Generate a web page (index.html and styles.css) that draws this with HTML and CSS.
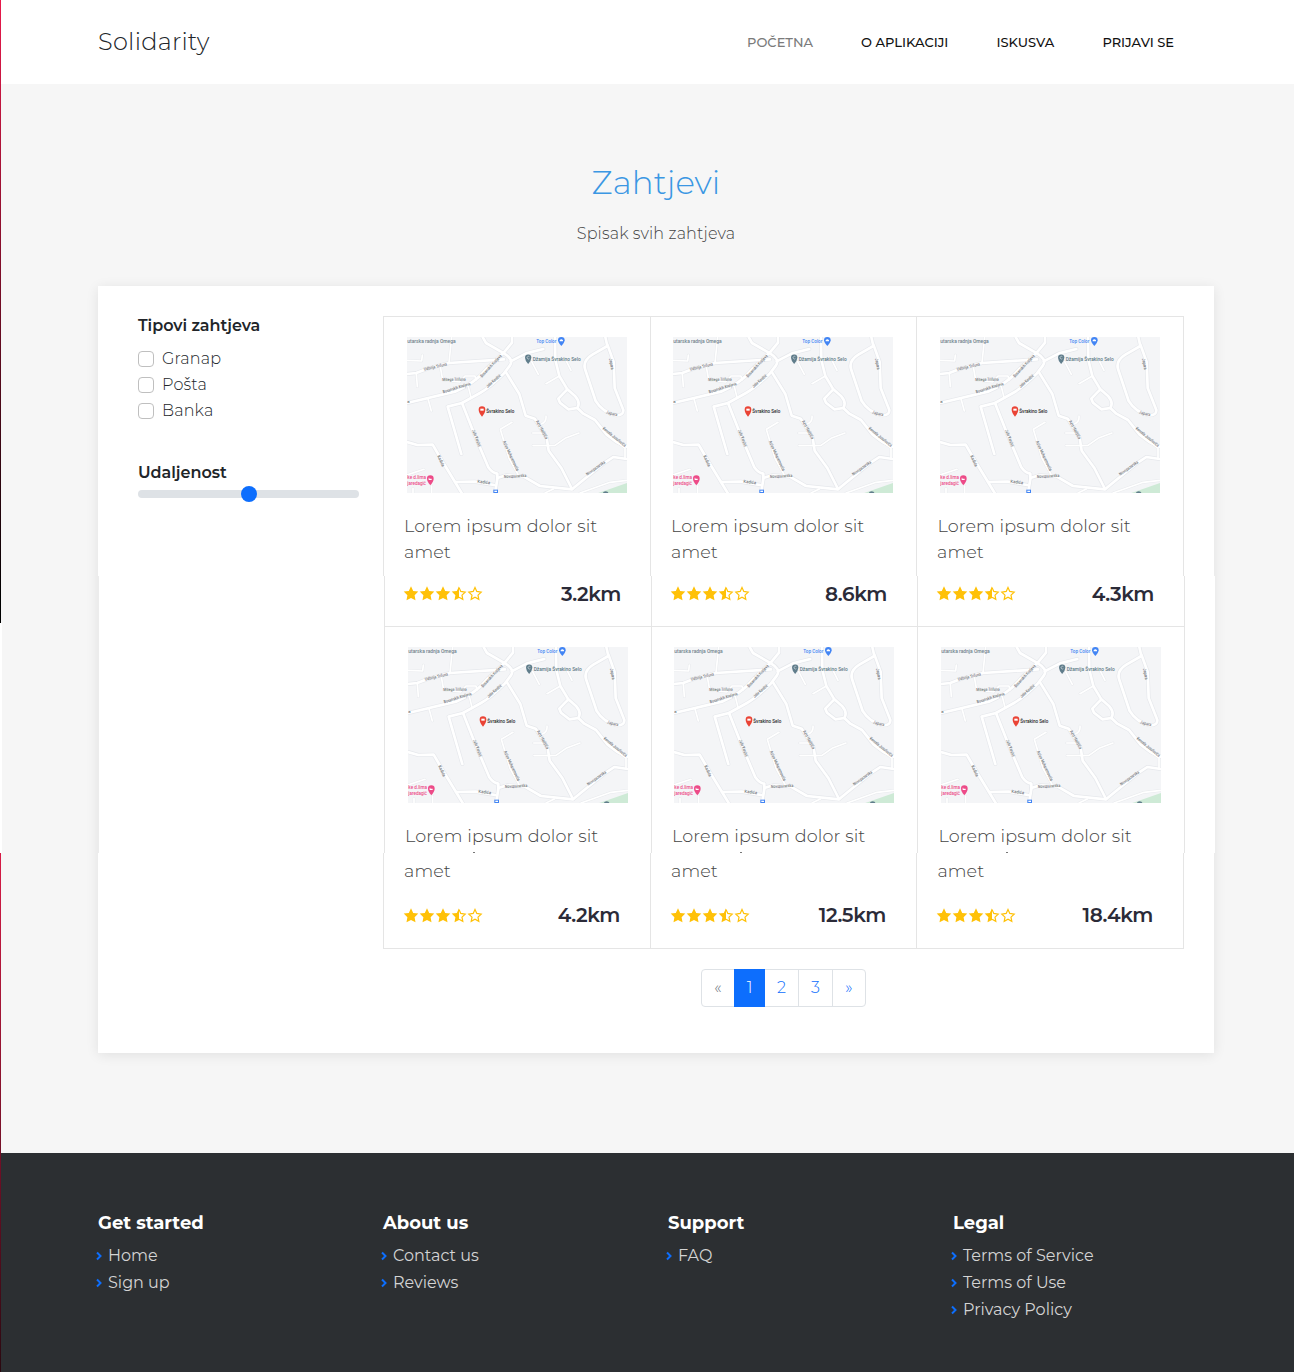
FILE: index.html
```html
<!DOCTYPE html>
<html lang="bs">
<head>
<meta charset="utf-8">
<title>Solidarity</title>
<link rel="stylesheet" href="styles.css">
</head>
<body>
<svg class="defs" width="0" height="0" aria-hidden="true">
  <symbol id="map" viewBox="81 81 660 468">
    <rect x="81" y="81" width="660" height="468" fill="#f4f5f7"/>
    <path d="M655 549 L741 519 V549Z" fill="#ceead6"/>
    <g id="roads" fill="none" stroke-linecap="round" stroke-linejoin="round">
      <g stroke="#e6e8ec" stroke-width="12">
        <path d="M81 279 L225 245 Q285 220 320 176 L372 127 L396 98 V81"/>
        <path d="M308 81 L318 99 L372 130 Q402 148 390 166 L372 190 Q330 232 300 249 L246 279 L203 290 L244 432"/>
        <path d="M81 192 L109 189 L146 175 L207 159 L372 148"/>
        <path d="M392 154 L438 130 L490 117"/>
        <path d="M246 279 L284 375 L325 472 Q338 490 352 491 V508 L345 549"/>
        <path d="M378 187 L418 252 L437 317 L464 326 L500 384 L506 422 L544 474 L576 537"/>
        <path d="M525 81 L526 150 L538 198 L562 238 L586 259 Q602 278 592 294 L565 298 L540 278 L535 266 L562 238"/>
        <path d="M592 294 L610 311 L645 330 L680 374 L709 396 L741 410"/>
        <path d="M676 81 L682 108 L637 134 Q606 153 616 180 L647 273 Q670 309 709 316 Q731 316 730 300 L704 234 L701 156 L682 103"/>
        <path d="M81 396 L112 405 L158 404 L183 447 L225 516 L245 549"/>
        <path d="M225 516 L284 515 L342 525 M352 504 L378 496 L430 499 L480 528 L576 538 L618 503 L670 461 L700 441 L741 447"/>
      </g>
      <g stroke="#e8eaed" stroke-width="8">
        <path d="M81 151 L125 153 L127 135 M109 190 L112 230 M215 81 L207 158 M180 165 L188 210 L239 216 L255 198 L285 198 L288 210 M265 230 L273 262 M144 266 L154 303 M415 495 L387 445 L361 358 L396 337 M455 155 L475 193 M538 198 L498 221 M555 145 L573 181 M458 369 L486 369 M459 407 L525 406 L555 385 L597 369 M498 318 Q500 337 483 342 M680 374 L735 414 V447 M81 495 L132 478 M99 549 V535 M155 549 V528 M495 549 L520 537 M600 549 L690 517 L741 511"/>
      </g>
      <g stroke="#fff" stroke-width="8">
        <path d="M81 279 L225 245 Q285 220 320 176 L372 127 L396 98 V81"/>
        <path d="M308 81 L318 99 L372 130 Q402 148 390 166 L372 190 Q330 232 300 249 L246 279 L203 290 L244 432"/>
        <path d="M81 192 L109 189 L146 175 L207 159 L372 148"/>
        <path d="M392 154 L438 130 L490 117"/>
        <path d="M246 279 L284 375 L325 472 Q338 490 352 491 V508 L345 549"/>
        <path d="M378 187 L418 252 L437 317 L464 326 L500 384 L506 422 L544 474 L576 537"/>
        <path d="M525 81 L526 150 L538 198 L562 238 L586 259 Q602 278 592 294 L565 298 L540 278 L535 266 L562 238"/>
        <path d="M592 294 L610 311 L645 330 L680 374 L709 396 L741 410"/>
        <path d="M676 81 L682 108 L637 134 Q606 153 616 180 L647 273 Q670 309 709 316 Q731 316 730 300 L704 234 L701 156 L682 103"/>
        <path d="M81 396 L112 405 L158 404 L183 447 L225 516 L245 549"/>
        <path d="M225 516 L284 515 L342 525 M352 504 L378 496 L430 499 L480 528 L576 538 L618 503 L670 461 L700 441 L741 447"/>
      </g>
      <g stroke="#fff" stroke-width="5">
        <path d="M81 151 L125 153 L127 135 M109 190 L112 230 M215 81 L207 158 M180 165 L188 210 L239 216 L255 198 L285 198 L288 210 M265 230 L273 262 M144 266 L154 303 M415 495 L387 445 L361 358 L396 337 M455 155 L475 193 M538 198 L498 221 M555 145 L573 181 M458 369 L486 369 M459 407 L525 406 L555 385 L597 369 M498 318 Q500 337 483 342 M680 374 L735 414 V447 M81 495 L132 478 M99 549 V535 M155 549 V528 M495 549 L520 537 M600 549 L690 517 L741 511"/>
      </g>
    </g>
    <g font-family="Roboto, sans-serif" font-size="13" font-weight="500" fill="#6f7377">
      <text transform="translate(133 182) rotate(-13)" textLength="70" lengthAdjust="spacingAndGlyphs">Udbinja Trifuna</text>
      <text transform="translate(187 213) rotate(-1)" textLength="70" lengthAdjust="spacingAndGlyphs">Mitega Trifuna</text>
      <text transform="translate(190 250) rotate(-17)" textLength="86" lengthAdjust="spacingAndGlyphs">Bosanskih Kraljeva</text>
      <text transform="translate(306 203) rotate(-47)" textLength="88" lengthAdjust="spacingAndGlyphs">Bosanskih Kraljeva</text>
      <text transform="translate(323 234) rotate(-41)" textLength="54" lengthAdjust="spacingAndGlyphs">Jaše Karabić</text>
      <text transform="translate(276 361) rotate(69)" textLength="54" lengthAdjust="spacingAndGlyphs">Jaše Karabić</text>
      <text transform="translate(368 395) rotate(65)" textLength="98" lengthAdjust="spacingAndGlyphs">Azize Muharemovića</text>
      <text transform="translate(467 334) rotate(61)" textLength="62" lengthAdjust="spacingAndGlyphs">Aziz Hadžića</text>
      <text transform="translate(687 146) rotate(79)" textLength="34" lengthAdjust="spacingAndGlyphs">Japara</text>
      <text transform="translate(677 310) rotate(15)" textLength="35" lengthAdjust="spacingAndGlyphs">Japara</text>
      <text transform="translate(667 357) rotate(39)" textLength="86" lengthAdjust="spacingAndGlyphs">Kemala Jusufovića</text>
      <text transform="translate(172 438) rotate(66)" textLength="36" lengthAdjust="spacingAndGlyphs">Kadića</text>
      <text transform="translate(292 518) rotate(8)" textLength="38" lengthAdjust="spacingAndGlyphs">Kadića</text>
      <text transform="translate(372 504) rotate(-3)" textLength="67" lengthAdjust="spacingAndGlyphs">Novopazarska</text>
      <text transform="translate(622 497) rotate(-35)" textLength="67" lengthAdjust="spacingAndGlyphs">Novopazarska</text>
      <text x="82" y="280">a</text>
      <g font-size="15">
        <text x="82" y="100" fill="#71838d" textLength="145" lengthAdjust="spacingAndGlyphs">utarska radnja Omega</text>
        <text x="469" y="100" fill="#3f86f4" textLength="60" lengthAdjust="spacingAndGlyphs">Top Color</text>
        <text x="458" y="154" fill="#617b86" textLength="144" lengthAdjust="spacingAndGlyphs">Džamija Švrakino Selo</text>
        <text x="319" y="308" fill="#292929" textLength="84" lengthAdjust="spacingAndGlyphs">Švrakino Selo</text>
        <g fill="#ed4b88">
          <text x="82" y="508" textLength="56" lengthAdjust="spacingAndGlyphs">ke d.lima</text>
          <text x="82" y="525" textLength="56" lengthAdjust="spacingAndGlyphs">jaredagić</text>
        </g>
      </g>
    </g>
    <path d="M296 299a10 10 0 1 1 20 0q0 9-10 21q-10-12-10-21Z" fill="#ea4335"/><path d="M301 296h10v6h-10z" fill="#fff"/>
    <path d="M435 143a9.500 9.500 0 1 1 19 0q0 8-9.500 19q-9.500-11-9.500-19Z" fill="#607d8b"/><path d="M448 140a4 4 0 1 0 0 6" fill="none" stroke="#dce4e8" stroke-width="2"/>
    <path d="M534 91a10 10 0 1 1 20 0q0 6-10 17q-10-11-10-17Z" fill="#4285f4"/><path d="M539 94v-3q5-7 10 0v3z" fill="#fff"/>
    <path d="M141 506a10 10 0 1 1 20 0q0 8-10 20q-10-12-10-20Z" fill="#ed4b88"/><path d="M146 503h2v3h7v4h-9z" fill="#fff"/>
    <rect x="340" y="539" width="14" height="10" fill="#4285f4"/><path d="M343 542h8v4h-8z" fill="#fff"/>
    <circle cx="677" cy="553" r="9" fill="#607d8b"/>
  </symbol>
  <symbol id="stars" viewBox="0 0 80 15">
    <g fill="#ffc107">
      <path id="star" d="M8 .3 10.200 4.900 15.300 5.600 11.600 9.200 12.500 14.200 8 11.900 3.500 14.200 4.400 9.200 .7 5.600 5.800 4.900Z"/>
      <use href="#star" x="16"/><use href="#star" x="32"/>
      <path d="M56 .3 V11.900 L51.500 14.200 52.400 9.200 48.700 5.600 53.800 4.900Z"/>
    </g>
    <g fill="none" stroke="#ffc107" stroke-width="1.200">
      <path d="M56 1.500 57.800 5.400 62.200 6.100 59 9.100 59.800 13.400 56 11.300"/>
      <path d="M72 1.500 73.800 5.400 78.200 6.100 75 9.100 75.800 13.400 72 11.300 68.200 13.400 69 9.100 65.800 6.100 70.200 5.400Z"/>
    </g>
  </symbol>
  <symbol id="chev" viewBox="0 0 6 10"><path d="M1 1.500 4.500 5 1 8.500" fill="none" stroke="#0d6efd" stroke-width="2"/></symbol>
</svg>
<div class="page">
  <header class="bar">
    <a class="brand">Solidarity</a>
    <nav class="nav"><a class="active">POČETNA</a><a>O APLIKACIJI</a><a>ISKUSVA</a><a>PRIJAVI SE</a></nav>
  </header>
  <main>
    <div class="intro"><h1>Zahtjevi</h1><p>Spisak svih zahtjeva</p></div>
    <section class="panel">
      <aside class="filters">
        <h2>Tipovi zahtjeva</h2>
        <label><i class="box"></i><span>Granap</span></label>
        <label><i class="box"></i><span>Pošta</span></label>
        <label><i class="box"></i><span>Banka</span></label>
        <h2 class="distance">Udaljenost</h2>
        <div class="range"><i class="thumb"></i></div>
      </aside>
      <div class="results">
        <div class="row top first">
          <article><svg class="map"><use href="#map"/></svg><h3>Lorem ipsum dolor sit amet</h3></article>
          <article><svg class="map"><use href="#map"/></svg><h3>Lorem ipsum dolor sit amet</h3></article>
          <article><svg class="map"><use href="#map"/></svg><h3>Lorem ipsum dolor sit amet</h3></article>
        </div>
        <div class="row meta shift">
          <div><div class="cell"><svg class="stars"><use href="#stars"/></svg><b>3.2km</b></div></div>
          <div><div class="cell"><svg class="stars"><use href="#stars"/></svg><b>8.6km</b></div></div>
          <div><div class="cell"><svg class="stars"><use href="#stars"/></svg><b>4.3km</b></div></div>
        </div>
        <div class="row top second shift">
          <article><svg class="map"><use href="#map"/></svg><h3>Lorem ipsum dolor sit</h3></article>
          <article><svg class="map"><use href="#map"/></svg><h3>Lorem ipsum dolor sit</h3></article>
          <article><svg class="map"><use href="#map"/></svg><h3>Lorem ipsum dolor sit</h3></article>
        </div>
        <div class="row last">
          <article><h3>amet</h3><div class="cell"><svg class="stars"><use href="#stars"/></svg><b>4.2km</b></div></article>
          <article><h3>amet</h3><div class="cell"><svg class="stars"><use href="#stars"/></svg><b>12.5km</b></div></article>
          <article><h3>amet</h3><div class="cell"><svg class="stars"><use href="#stars"/></svg><b>18.4km</b></div></article>
        </div>
        <div class="pages"><span class="off">«</span><span class="on">1</span><span>2</span><span>3</span><span>»</span></div>
      </div>
    </section>
  </main>
  <footer>
    <div><h4>Get started</h4><a><svg><use href="#chev"/></svg>Home</a><a><svg><use href="#chev"/></svg>Sign up</a></div>
    <div><h4>About us</h4><a><svg><use href="#chev"/></svg>Contact us</a><a><svg><use href="#chev"/></svg>Reviews</a></div>
    <div><h4>Support</h4><a><svg><use href="#chev"/></svg>FAQ</a></div>
    <div><h4>Legal</h4><a><svg><use href="#chev"/></svg>Terms of Service</a><a><svg><use href="#chev"/></svg>Terms of Use</a><a><svg><use href="#chev"/></svg>Privacy Policy</a></div>
  </footer>
</div>
</body>
</html>
```
FILE: styles.css
```css
* { box-sizing: border-box; }
body { margin: 0; font: 300 16px/26px Montserrat, Inter, sans-serif; color: #212529; background: #f6f6f6; }
h1, h2, h3, h4, p { margin: 0; }
.defs { position: absolute; }
.page { position: relative; height: 1372px; overflow: hidden; display: flex; flex-direction: column; }
.page::before { content: ""; position: absolute; left: 0; top: 0; width: 1px; height: 623px; background: linear-gradient(#e8194b, #000 96%); }
.page::after { content: ""; position: absolute; left: 0; top: 623px; width: 2px; height: 749px;
  background: linear-gradient(#fff 230px, transparent 230px) 0 0 / 2px 100% no-repeat, linear-gradient(#d81b46 230px, #2a0810) 0 0 / 1px 100% no-repeat; }
.bar { height: 84px; background: #fff; padding: 0 120px 0 98px; display: flex; justify-content: space-between; align-items: center; }
.brand { font-size: 24px; letter-spacing: .3px; }
.nav { display: flex; gap: 48px; font-size: 13px; font-weight: 500; color: #111; }
.nav .active { color: #7b7b7b; }
main { height: 1069px; padding: 76px 80px 0 98px; }
.intro { height: 126px; text-align: center; }
.intro h1 { font-size: 32.5px; font-weight: 300; line-height: 45px; color: #3b97e3; letter-spacing: .1px; }
.intro p { padding-top: 16px; letter-spacing: .13px; color: #444; }
.panel { position: relative; width: 1116px; height: 767px; background: #fff; box-shadow: 0 2px 12px rgba(0,0,0,.09); display: flex; padding: 30px 30px 0 40px; }
.panel::before { content: ""; position: absolute; left: 0; top: 290px; width: 1px; height: 277px; background: #ececec; }
.panel::after { content: ""; position: absolute; right: -1px; top: 290px; width: 1px; height: 277px; background: #fff; }
.filters { width: 245px; padding: 0 24px 0 0; }
.filters h2 { font-size: 16px; font-weight: 600; line-height: 19px; padding-bottom: 10px; letter-spacing: -.03px; }
.filters label { display: flex; align-items: center; gap: 8px; height: 26px; letter-spacing: .15px; }
.filters label span { padding-top: 2px; }
.box { width: 16px; height: 16px; border: 1px solid #bfbfbf; border-radius: 4px; margin-top: 1px; }
.filters .distance { margin-top: 40px; padding-bottom: 8px; }
.range { height: 8px; border-radius: 4px; background: #dee2e6; display: flex; justify-content: center; align-items: center; }
.thumb { width: 16px; height: 16px; border-radius: 50%; background: #0d6efd; }
.results { width: 801px; display: flex; flex-direction: column; }
.row { display: grid; grid-template-columns: 267px 266px 268px; }
.row > * { border-left: 1px solid #e5e5e5; }
.row > :last-child { border-right: 1px solid #e5e5e5; }
.shift { margin-left: 1px; margin-right: -1px; }
.first { height: 260px; border-top: 1px solid #e5e5e5; }
.meta { height: 50px; }
.second { height: 227px; border-top: 1px solid #e5e5e5; }
.last { height: 96px; border-bottom: 1px solid #e5e5e5; }
.top article { padding: 20px 20px 0; }
.map { display: block; width: 220px; height: 156px; margin: 0 0 20px 3px; }
.top article:nth-child(2) .map { margin-left: 2px; }
/* sliver of a letter dot left along the lower edge of the second row */
.second article { position: relative; }
.second article::after { content: ""; position: absolute; left: 88px; bottom: 0; width: 2px; height: 1px; background: #777; }
h3 { font-size: 17.6px; font-weight: 300; letter-spacing: .12px; line-height: 26px; color: #444; }
.row > :nth-child(3) h3 { text-indent: .4px; }
.cell { display: flex; justify-content: space-between; align-items: center; height: 36px; padding: 0 30px 0 18px; }
.cell b { font-size: 20px; font-weight: 600; line-height: 24px; color: #2b2b38; letter-spacing: -.4px; }
.stars { width: 80px; height: 15px; margin-top: -1px; }
.last h3 { padding: 5px 0 0 20px; }
.last .cell { margin-top: 13px; }
.last .stars { margin: 1px 0 0 1px; }
.pages { display: flex; align-self: center; margin-top: 20px; height: 38px; border: 1px solid #dee2e6; border-radius: 4px; color: #0d6efd; line-height: 36px; text-align: center; }
.pages span { width: 34px; border-left: 1px solid #dee2e6; }
.pages .off { width: 32px; border: 0; color: #6c757d; }
.pages .on { width: 31px; height: 38px; margin-top: -1px; border: 0; background: #0d6efd; color: #fff; line-height: 38px; }
.pages .on + span { border: 0; width: 33px; }
.pages span:last-child { width: 33px; }
footer { height: 219px; background: #2c2f32; padding: 56px 98px 0; display: grid; grid-template-columns: repeat(4, 285px); color: #d4d4d4; font-weight: 400; }
footer div { display: flex; flex-direction: column; }
footer h4 { font-size: 18px; font-weight: 700; color: #fff; line-height: 28px; margin-bottom: 5px; }
footer a { display: flex; align-items: center; height: 27px; gap: 6px; margin-left: -2px; }
footer svg { width: 6px; height: 10px; margin-top: 1px; }
```
